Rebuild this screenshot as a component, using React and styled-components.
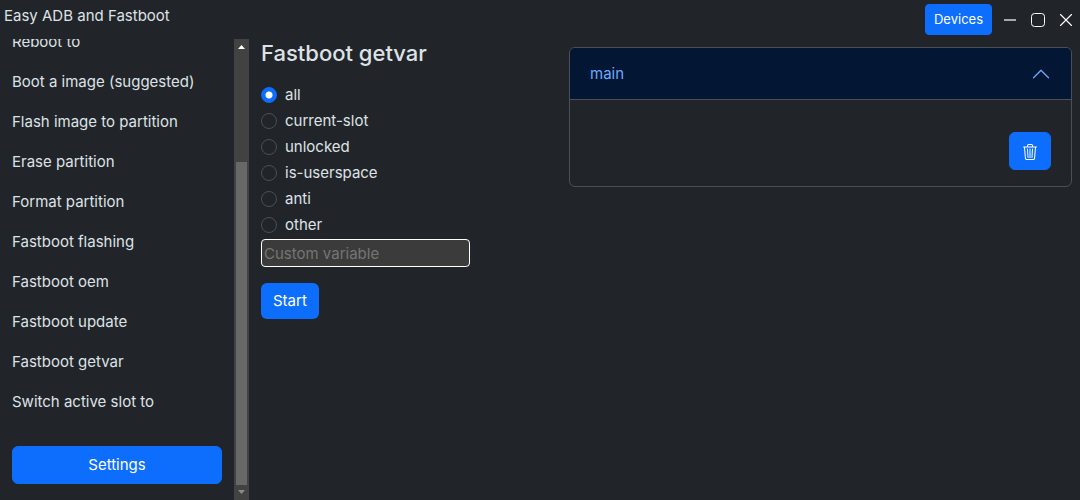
import React, { useState } from "react";
import styled, { createGlobalStyle } from "styled-components";

const GlobalStyle = createGlobalStyle`
  *, *::before, *::after { box-sizing: border-box; }
  body {
    margin: 0;
    background: #212529;
    color: #dee2e6;
    font-family: Inter, "Liberation Sans", sans-serif;
    font-size: 15px;
    line-height: 24px;
  }
  button, input { font: inherit; }
`;

const Window = styled.div`
  display: flex;
  flex-direction: column;
  height: 100vh;
  overflow: hidden;
`;

const TitleBar = styled.header`
  display: flex;
  flex: none;
  align-items: center;
  justify-content: space-between;
  height: 39px;
  padding: 0 8px 0 4px;
`;

const AppTitle = styled.span`
  padding-bottom: 8px;
`;

const WindowControls = styled.div`
  display: flex;
  align-items: center;
  gap: 12px;
`;

const Button = styled.button`
  padding: ${(p) => (p.$small ? "4px 8px" : "6px 12px")};
  border: 1px solid #0d6efd;
  border-radius: ${(p) => (p.$small ? "4px" : "6px")};
  background: #0d6efd;
  color: #fff;
  font-size: ${(p) => (p.$small ? "13px" : "15px")};
  line-height: ${(p) => (p.$small ? "21px" : "24px")};
  cursor: pointer;
`;

const StartButton = styled(Button)`
  margin-top: 16px;
  padding: 6px 12px;
  border: 0;
`;

const IconButton = styled(Button)`
  display: flex;
  padding: 11px 12px 9px;
`;

const ControlButton = styled.button`
  display: flex;
  padding: 0;
  border: 0;
  background: none;
  color: #fff;
`;

const Body = styled.div`
  display: flex;
  flex: 1;
  min-height: 0;
`;

const Sidebar = styled.aside`
  display: flex;
  flex: none;
  width: 249px;
`;

const SidebarContent = styled.div`
  display: flex;
  flex: 1;
  flex-direction: column;
  justify-content: flex-end;
  gap: 24px;
  padding: 0 12px 16px;
  overflow: hidden;
`;

const NavList = styled.nav`
  display: flex;
  flex-direction: column;
`;

const NavLink = styled.a`
  padding: 8px 0;
  color: inherit;
  text-decoration: none;
`;

const ScrollTrack = styled.div`
  display: flex;
  flex: none;
  flex-direction: column;
  align-items: center;
  width: 15px;
  background: #424242;
`;

const ScrollArrow = styled.svg`
  display: block;
  flex: none;
  width: 15px;
  height: 15px;
`;

const ScrollSpace = styled.div`
  flex: 108;
`;

const ScrollThumb = styled.div`
  flex: 323;
  width: 11px;
  background: #686868;
`;

const Main = styled.main`
  display: grid;
  flex: 1;
  grid-template-columns: minmax(0, 308fr) minmax(0, 503fr);
  align-items: start;
  padding: 0 8px 0 12px;
`;

const Form = styled.form`
  display: flex;
  flex-direction: column;
  align-items: flex-start;
`;

const Heading = styled.h1`
  margin: 0 0 14px;
  font-size: 22px;
  font-weight: 500;
  line-height: 29px;
`;

const Option = styled.label`
  display: flex;
  align-items: center;
  gap: 8px;
  height: 26px;
`;

const Radio = styled.input`
  appearance: none;
  width: 16px;
  height: 16px;
  margin: 0;
  border: 1px solid #495057;
  border-radius: 50%;
  background: #212529;

  &:checked {
    border-color: #0d6efd;
    background: radial-gradient(circle, #fff 3px, #0d6efd 4px);
  }
`;

const TextInput = styled.input`
  width: 209px;
  max-width: 100%;
  height: 28px;
  margin-top: 1px;
  padding: 1px 2px;
  border: 1px solid #fff;
  border-radius: 4px;
  background: #3b3b3b;
  color: #fff;

  &::placeholder { color: #757575; opacity: 1; }
`;

const Accordion = styled.section`
  margin-top: 8px;
  border: 1px solid #495057;
  border-radius: 6px;
  overflow: hidden;
`;

const AccordionHeader = styled.button`
  display: flex;
  align-items: center;
  justify-content: space-between;
  width: 100%;
  height: 52px;
  padding: 0 20px;
  border: 0;
  border-bottom: 1px solid #495057;
  background: #031633;
  color: #6ea8fe;
`;

const AccordionBody = styled.div`
  display: flex;
  justify-content: flex-end;
  padding: 32px 20px 16px;
`;

const COMMANDS = [
  "Reboot to",
  "Boot a image (suggested)",
  "Flash image to partition",
  "Erase partition",
  "Format partition",
  "Fastboot flashing",
  "Fastboot oem",
  "Fastboot update",
  "Fastboot getvar",
  "Switch active slot to",
];

const VARIABLES = ["all", "current-slot", "unlocked", "is-userspace", "anti", "other"];

export default function App() {
  const [variable, setVariable] = useState("all");
  return (
    <Window>
      <GlobalStyle />
      <TitleBar>
        <AppTitle>Easy ADB and Fastboot</AppTitle>
        <WindowControls>
          <Button $small type="button">Devices</Button>
          <ControlButton type="button" aria-label="Minimize">
            <svg width="12" height="16" viewBox="0 0 12 16">
              <path d="M0 8H12" stroke="#a6a8a9" strokeWidth="2" />
            </svg>
          </ControlButton>
          <ControlButton type="button" aria-label="Maximize">
            <svg width="20" height="16" viewBox="0 0 20 16" fill="none">
              <rect x="3.5" y="1.5" width="13" height="13" rx="3" stroke="currentColor" />
            </svg>
          </ControlButton>
          <ControlButton type="button" aria-label="Close">
            <svg width="12" height="16" viewBox="0 0 12 16" fill="none">
              <path d="M.5 2.5 11.5 13.5M11.5 2.5.5 13.5" stroke="currentColor" strokeWidth="1.1" strokeLinecap="round" />
            </svg>
          </ControlButton>
        </WindowControls>
      </TitleBar>
      <Body>
        <Sidebar>
          <SidebarContent>
            <NavList>
              {COMMANDS.map((name) => (
                <NavLink href="#" key={name}>{name}</NavLink>
              ))}
            </NavList>
            <Button type="button">Settings</Button>
          </SidebarContent>
          <ScrollTrack aria-hidden="true">
            <ScrollArrow viewBox="0 0 15 15"><path d="M4 10 7.5 6 11 10Z" fill="#fff" /></ScrollArrow>
            <ScrollSpace />
            <ScrollThumb />
            <ScrollArrow viewBox="0 0 15 15"><path d="M4 5 7.5 9 11 5Z" fill="#8b8b8b" /></ScrollArrow>
          </ScrollTrack>
        </Sidebar>
        <Main>
          <Form onSubmit={(e) => e.preventDefault()}>
            <Heading>Fastboot getvar</Heading>
            {VARIABLES.map((name) => (
              <Option key={name}>
                <Radio type="radio" name="variable" value={name} checked={variable === name} onChange={() => setVariable(name)} />
                {name}
              </Option>
            ))}
            <TextInput type="text" placeholder="Custom variable" aria-label="Custom variable" />
            <StartButton type="submit">Start</StartButton>
          </Form>
          <Accordion>
            <AccordionHeader type="button" aria-expanded="true">
              main
              <svg width="20" height="20" viewBox="0 0 16 16" fill="currentColor">
                <path fillRule="evenodd" d="M7.646 4.646a.5.5 0 0 1 .708 0l6 6a.5.5 0 0 1-.708.708L8 5.707l-5.646 5.647a.5.5 0 0 1-.708-.708z" />
              </svg>
            </AccordionHeader>
            <AccordionBody>
              <IconButton type="button" aria-label="Delete">
                <svg width="16" height="16" viewBox="0 0 16 16" fill="currentColor">
                  <path d="M6.5 1h3a.5.5 0 0 1 .5.5v1H6v-1a.5.5 0 0 1 .5-.5M11 2.5v-1A1.5 1.5 0 0 0 9.5 0h-3A1.5 1.5 0 0 0 5 1.5v1H1.5a.5.5 0 0 0 0 1h.538l.853 10.66A2 2 0 0 0 4.885 16h6.23a2 2 0 0 0 1.994-1.84l.853-10.66h.538a.5.5 0 0 0 0-1zm1.958 1-.846 10.58a1 1 0 0 1-.997.92h-6.23a1 1 0 0 1-.997-.92L3.042 3.5zm-7.487 1a.5.5 0 0 1 .528.47l.5 8.5a.5.5 0 0 1-.998.06L5 5.03a.5.5 0 0 1 .47-.53Zm5.058 0a.5.5 0 0 1 .47.53l-.5 8.5a.5.5 0 1 1-.998-.06l.5-8.5a.5.5 0 0 1 .528-.47M8 4.5a.5.5 0 0 1 .5.5v8.5a.5.5 0 0 1-1 0V5a.5.5 0 0 1 .5-.5" />
                </svg>
              </IconButton>
            </AccordionBody>
          </Accordion>
        </Main>
      </Body>
    </Window>
  );
}
